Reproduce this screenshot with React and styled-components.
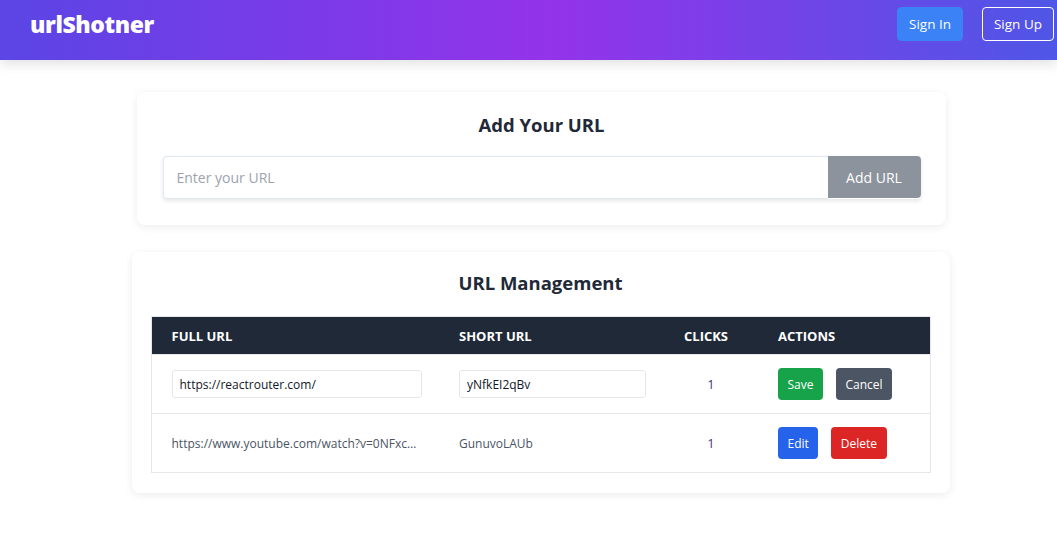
import React from 'react'
import styled, { createGlobalStyle } from 'styled-components'

const GlobalStyle = createGlobalStyle`
    body {
        margin: 0;
        background: #ffffff;
        font-family: "Open Sans", "Noto Sans", sans-serif;
        color: #1f2937;
    }
    * { box-sizing: border-box; }
`

const Navbar = styled.header`
    height: 60px;
    display: flex;
    align-items: flex-start;
    justify-content: space-between;
    padding: 7px 3px 0 30px;
    background: linear-gradient(to right, #5b45e4, #9333ea 52%, #4f56e6);
    box-shadow: 0 4px 12px rgba(0, 0, 0, 0.12);
`

const Logo = styled.h1`
    margin: 0;
    height: 34px;
    display: flex;
    align-items: center;
    color: #fff;
    font-size: 23px;
    font-weight: 800;
    letter-spacing: -0.4px;
`

const NavButtons = styled.div`
    display: flex;
    gap: 19px;
`

const NavButton = styled.button`
    height: 34px;
    padding: 0 11px;
    border-radius: 4px;
    font-family: inherit;
    font-size: 13.5px;
    color: #fff;
    cursor: pointer;
    background: ${p => (p.$outline ? 'transparent' : '#3b82f6')};
    border: 1px solid ${p => (p.$outline ? '#ffffff' : '#3b82f6')};
`

const Main = styled.main`
    display: flex;
    flex-direction: column;
    align-items: center;
    padding: 32px 0 40px 24px;
    gap: 27px;
`

const Card = styled.section`
    width: ${p => p.$width}px;
    margin-left: ${p => p.$shift || 0}px;
    background: #fff;
    border-radius: 8px;
    box-shadow: 0 2px 8px rgba(0, 0, 0, 0.08);
    padding: ${p => p.$pad};
`

const Title = styled.h2`
    margin: 0 0 ${p => p.$gap}px;
    text-align: center;
    font-size: 18.5px;
    line-height: 28px;
    font-weight: 700;
    color: #1f2937;
`

const AddRow = styled.form`
    display: flex;
    border-radius: 4px;
    box-shadow: 0 2px 4px rgba(0, 0, 0, 0.1);
`

const UrlInput = styled.input`
    flex: 1;
    height: 43px;
    padding: 0 13px;
    border: 1px solid #e2e8f0;
    border-right: none;
    border-radius: 4px 0 0 4px;
    font-family: inherit;
    font-size: 14px;
    outline: none;
    &::placeholder { color: #9ca3af; }
`

const AddButton = styled.button`
    width: 93px;
    height: 42px;
    border: none;
    border-radius: 0 4px 4px 0;
    background: #8d939c;
    color: #fff;
    font-family: inherit;
    font-size: 14px;
`

const Table = styled.table`
    width: 100%;
    border-collapse: collapse;
    table-layout: fixed;
    border: 1px solid #e5e7eb;
`

const Th = styled.th`
    background: #1f2937;
    color: #fff;
    text-align: left;
    font-size: 13px;
    font-weight: 700;
    height: 38px;
    padding: 0 20px;
    white-space: nowrap;
`

const Tr = styled.tr`
    border-top: 1px solid #e5e7eb;
`

const Td = styled.td`
    height: 59px;
    padding: 0 ${p => (p.$center ? 0 : 20)}px;
    text-align: ${p => (p.$center ? 'center' : 'left')};
    font-size: 12px;
    color: ${p => (p.$center ? '#3b2f78' : '#4b5563')};
    white-space: nowrap;
`

const Truncate = styled.div`
    overflow: hidden;
    text-overflow: ellipsis;
    white-space: nowrap;
`

const CellInput = styled.input`
    display: block;
    width: ${p => p.$width}px;
    height: 28px;
    padding: 0 7px;
    border: 1px solid #e5e7eb;
    border-radius: 3px;
    font-family: inherit;
    font-size: 12px;
    color: #111827;
    outline: none;
`

const Actions = styled.div`
    display: flex;
    gap: 13px;
`

const colors = {
    save: '#16a34a',
    cancel: '#4b5563',
    edit: '#2563eb',
    delete: '#dc2626',
}

const ActionButton = styled.button`
    height: 32px;
    padding: 0 9.5px;
    border: none;
    border-radius: 4px;
    background: ${p => colors[p.$kind]};
    color: #fff;
    font-family: inherit;
    font-size: 12px;
`

const rows = [
    { full: 'https://reactrouter.com/', short: 'yNfkEI2qBv', clicks: 1, editing: true },
    { full: 'https://www.youtube.com/watch?v=0NFxcZJ4m9s', short: 'GunuvoLAUb', clicks: 1, editing: false },
]

const App = () => {
    return (
        <>
            <GlobalStyle />
            <Navbar>
                <Logo>urlShotner</Logo>
                <NavButtons>
                    <NavButton>Sign In</NavButton>
                    <NavButton $outline>Sign Up</NavButton>
                </NavButtons>
            </Navbar>
            <Main>
                <Card $width={809} $shift={1} $pad="19px 25px 26px 26px">
                    <Title $gap={17}>Add Your URL</Title>
                    <AddRow onSubmit={e => e.preventDefault()}>
                        <UrlInput placeholder="Enter your URL" />
                        <AddButton type="submit">Add URL</AddButton>
                    </AddRow>
                </Card>
                <Card $width={818} $pad="17px 19px 20px 19px">
                    <Title $gap={19}>URL Management</Title>
                    <Table>
                        <colgroup>
                            <col style={{ width: 288 }} />
                            <col style={{ width: 225 }} />
                            <col style={{ width: 94 }} />
                            <col />
                        </colgroup>
                        <thead>
                            <tr>
                                <Th>FULL URL</Th>
                                <Th>SHORT URL</Th>
                                <Th>CLICKS</Th>
                                <Th>ACTIONS</Th>
                            </tr>
                        </thead>
                        <tbody>
                            {rows.map(r => (
                                <Tr key={r.short}>
                                    <Td>{r.editing ? <CellInput $width={250} defaultValue={r.full} /> : <Truncate>{r.full}</Truncate>}</Td>
                                    <Td>{r.editing ? <CellInput $width={187} defaultValue={r.short} /> : <Truncate>{r.short}</Truncate>}</Td>
                                    <Td $center>{r.clicks}</Td>
                                    <Td>
                                        {r.editing ? (
                                            <Actions>
                                                <ActionButton $kind="save">Save</ActionButton>
                                                <ActionButton $kind="cancel">Cancel</ActionButton>
                                            </Actions>
                                        ) : (
                                            <Actions>
                                                <ActionButton $kind="edit">Edit</ActionButton>
                                                <ActionButton $kind="delete">Delete</ActionButton>
                                            </Actions>
                                        )}
                                    </Td>
                                </Tr>
                            ))}
                        </tbody>
                    </Table>
                </Card>
            </Main>
        </>
    )
}

export default App
